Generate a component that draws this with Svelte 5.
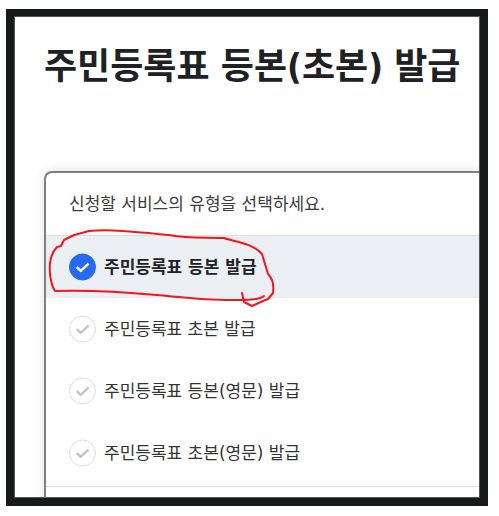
<script>
  const services = [
    '주민등록표 등본 발급',
    '주민등록표 초본 발급',
    '주민등록표 등본(영문) 발급',
    '주민등록표 초본(영문) 발급',
  ];
  let selected = $state(0);
</script>

<main>
  <h1>주민등록표 등본(초본) 발급</h1>
  <fieldset>
    <legend>신청할 서비스의 유형을 선택하세요.</legend>
    <div class="options">
      {#each services as service, i}
        <label class:active={selected === i}>
          <input type="radio" name="service" value={i} bind:group={selected} />
          <svg class="mark" viewBox="0 0 28 28" aria-hidden="true">
            <circle cx="13.5" cy="14" r="13" />
            <path d="M7.7 14.2 L11.7 17.9 L19.6 10.6" />
          </svg>
          <span>{service}</span>
        </label>
      {/each}
      <svg class="scribble" viewBox="0 0 230 80" aria-hidden="true">
        <path d="M9 61 C5 55 3 43 4 33 C5 25 8 20 11 17 L15 16 L18 10 L28 5 L43 1 C66 -1 92 2 123 5 C145 9 157 7 178 8 C188 12 205 12 216 24 L222 44 C227 49 228 56 227 63 L222 69 L217 71 L206 76 L198 72 L196 63 M218 66 C213 70 201 70 186 70 C157 70 134 67 111 65 C78 62 43 60 9 61" />
      </svg>
    </div>
  </fieldset>
</main>

<style>
  :global(body) {
    background: #fff;
  }

  main {
    box-sizing: border-box;
    height: calc(100vh - 19px);
    margin: 9px 11px 10px 6px;
    padding: 24px 1px 0 30px;
    overflow: hidden;
    border: 8px solid #181a19;
    border-top-width: 7px;
    box-shadow: inset 0 0 0 1px #555857;
    color: #202124;
    font-family: 'DejaVu Sans', 'Noto Sans CJK KR', sans-serif;
  }

  h1 {
    margin: 0;
    font-family: 'DejaVu Sans Condensed', 'Noto Sans CJK KR', sans-serif;
    font-size: 36px;
    font-weight: 700;
    line-height: 54px;
    white-space: nowrap;
  }

  fieldset {
    min-width: 0;
    height: 400px;
    margin: 77px 0 0;
    padding: 0;
    border: solid #808080;
    border-width: 2px 0 0 2px;
    border-radius: 8px 0 0 0;
    box-shadow: 0 0 10px #0002;
  }

  legend {
    float: left;
    box-sizing: border-box;
    width: 100%;
    padding: 0 0 0 23px;
    border-bottom: 1px solid #dcdee0;
    color: #3c3c3c;
    font-size: 17px;
    line-height: 62px;
  }

  .options {
    position: relative;
    clear: both;
    padding-bottom: 2px;
    border-bottom: 1px solid #ddd;
  }

  label {
    display: flex;
    align-items: center;
    gap: 7px;
    height: 62px;
    padding-left: 23px;
    color: #333;
    font-size: 17px;
    line-height: 24px;
    white-space: nowrap;
    cursor: pointer;
  }

  label.active {
    background: #ebeff4;
    color: #202124;
    font-weight: 700;
  }

  input {
    position: absolute;
    width: 28px;
    height: 28px;
    margin: 0;
    opacity: 0;
  }

  .mark {
    flex: none;
    width: 28px;
    height: 28px;
    fill: #fff;
    stroke: #ddd;
    stroke-width: 1;
  }

  .mark path {
    fill: none;
    stroke: #c4c4c4;
    stroke-width: 2.5;
  }

  .active .mark circle {
    fill: #256aef;
    stroke: #256aef;
  }

  .active .mark path {
    stroke: #fff;
  }

  .scribble {
    position: absolute;
    top: -6px;
    left: 0;
    width: 230px;
    height: 80px;
    overflow: visible;
    fill: none;
    stroke: #f5161c;
    stroke-width: 2;
    stroke-linecap: round;
    stroke-linejoin: round;
    pointer-events: none;
  }
</style>
